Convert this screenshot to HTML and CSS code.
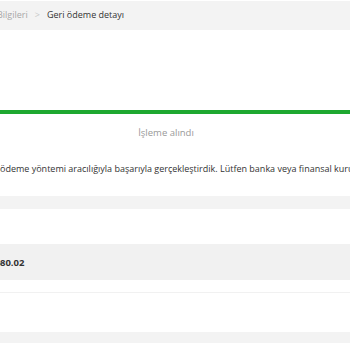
FILE: index.html
```html
<!DOCTYPE html>
<html lang="tr">
<head>
  <meta charset="UTF-8">
  <meta name="viewport" content="width=device-width, initial-scale=1.0">
  <title>Geri ödeme detayı</title>
  <link rel="stylesheet" href="styles.css">
</head>
<body>
  <div class="page">
    <div class="crumbs">
      <span class="crumb">Bilgileri</span>
      <span class="sep">&gt;</span>
      <span class="crumb current">Geri ödeme detayı</span>
    </div>

    <div class="status">
      <div class="bar"></div>
      <div class="status-text">İşleme alındı</div>
    </div>

    <p class="note">ödeme yöntemi aracılığıyla başarıyla gerçekleştirdik. Lütfen banka veya finansal kuruluşunuzla iletişime geçin.</p>

    <div class="row head"></div>
    <div class="row blank"></div>
    <div class="row total"><span class="amount">₺80.02</span></div>
    <div class="row blank line"></div>
    <div class="row head"></div>
  </div>
</body>
</html>
```
FILE: styles.css
```css
body, p {
    margin: 0;
}

body {
    font-family: "Open Sans", "Liberation Sans", sans-serif;
    color: #333;
    background: #fff;
    overflow: hidden;
}

.page {
    width: 350px;
    padding-top: 1px;
}

.crumbs {
    height: 29px;
    background-color: #f3f3f3;
    display: flex;
    align-items: center;
    font-size: 9px;
    margin-left: -3px;
    padding-bottom: 2px;
    box-sizing: border-box;
}
.crumb {
    color: #a8a8a8;
}
.crumb.current {
    color: #333;
}
.sep {
    color: #c8c8c8;
    margin: 0 7px;
}

.status {
    margin-top: 80px;
}
.bar {
    height: 4px;
    background-color: #1ea830;
}
.status-text {
    text-align: center;
    font-size: 9.5px;
    line-height: 14px;
    color: #999;
    margin-top: 12px;
    padding-right: 18px;
}

.note {
    font-size: 9px;
    line-height: 14px;
    white-space: nowrap;
    margin-top: 22px;
    color: #333;
}

.row.head {
    height: 13px;
    background-color: #f3f3f3;
    margin-top: 20px;
}
.row.blank {
    height: 35px;
}
.row.total {
    height: 36px;
    background-color: #f1f1f1;
    display: flex;
    align-items: center;
}
.amount {
    font-size: 9.5px;
    font-weight: bold;
    margin-left: -5px;
}
.row.line {
    border-top: 1px solid #f1f1f1;
    margin-top: 12px;
    height: 39px;
}
.row.line + .row.head {
    margin-top: 0;
    height: 11px;
}
```
